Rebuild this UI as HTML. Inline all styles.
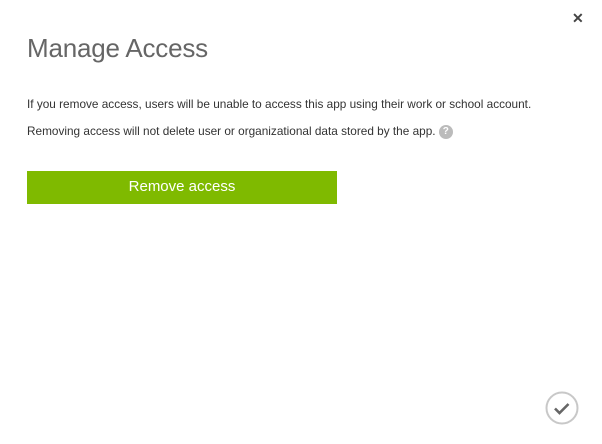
<!DOCTYPE html>
<html><head><meta charset="utf-8"><style>
body{margin:0;width:602px;height:444px;background:#fff;position:relative;overflow:hidden;font-family:"Liberation Sans",sans-serif;color:#333}
.t{position:absolute;left:27px;top:33px;font-size:26px;color:#666;font-weight:300;letter-spacing:-0.2px}
.p{position:absolute;left:27px;font-size:11.8px;color:#333;white-space:nowrap}
.btn{position:absolute;left:27px;top:171px;width:310px;height:33px;background:#7fba00;color:#fff;font-size:15px;text-align:center;line-height:32px}
.x{position:absolute;left:572px;top:10px;font-size:14px;font-weight:bold;color:#444}
</style></head><body>
<div class="x">✕</div>
<div class="t">Manage Access</div>
<div class="p" style="top:97px">If you remove access, users will be unable to access this app using their work or school account.</div>
<div class="p" style="top:124px">Removing access will not delete user or organizational data stored by the app. <span style="display:inline-block;width:14px;height:14px;border-radius:50%;background:#bbb;color:#fff;font-size:10px;text-align:center;line-height:14px;font-weight:bold;vertical-align:1px">?</span></div>
<div class="btn">Remove access</div>
<svg style="position:absolute;left:545px;top:391px" width="34" height="34" viewBox="0 0 34 34"><circle cx="17" cy="17" r="15.5" fill="none" stroke="#c8c8c8" stroke-width="2"/><path d="M10 17.5l4.5 4.5 9-9" fill="none" stroke="#666" stroke-width="2.6"/></svg>
</body></html>
